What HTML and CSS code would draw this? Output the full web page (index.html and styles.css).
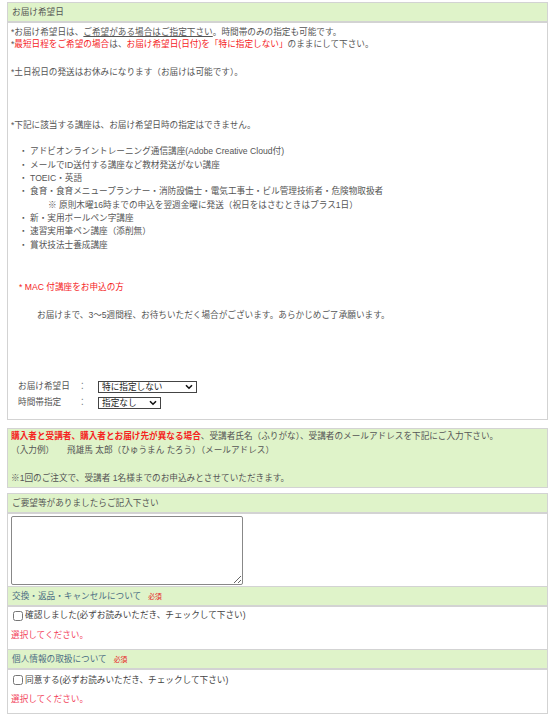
FILE: index.html
```html
<!DOCTYPE html>
<html lang="ja">
<head>
  <meta charset="UTF-8">
  <title>お届け希望日</title>
  <link rel="stylesheet" href="styles.css">
</head>
<body>
  <div class="page">
    <section class="box">
      <h2 class="box-head">お届け希望日</h2>
      <div class="box-body">
        <p class="lead">*お届け希望日は、<span class="under">ご希望がある場合はご指定下さい</span>。時間帯のみの指定も可能です。<br>
          *<span class="red">最短日程をご希望の場合</span>は、<span class="red">お届け希望日(日付)を「特に指定しない」</span>のままにして下さい。</p>
        <p class="holiday">*土日祝日の発送はお休みになります（お届けは可能です）。</p>
        <p class="except">*下記に該当する講座は、お届け希望日時の指定はできません。</p>
        <ul class="course-list">
          <li>・ アドビオンライントレーニング通信講座(Adobe Creative Cloud付)</li>
          <li>・ メールでID送付する講座など教材発送がない講座</li>
          <li>・ TOEIC・英語</li>
          <li>・ 食育・食育メニュープランナー・消防設備士・電気工事士・ビル管理技術者・危険物取扱者</li>
          <li class="sub">※ 原則木曜16時までの申込を翌週金曜に発送（祝日をはさむときはプラス1日）</li>
          <li>・ 新・実用ボールペン字講座</li>
          <li>・ 速習実用筆ペン講座（添削無）</li>
          <li>・ 賞状技法士養成講座</li>
        </ul>
        <p class="mac red">* MAC 付講座をお申込の方</p>
        <p class="mac-note">お届けまで、3〜5週間程、お待ちいただく場合がございます。あらかじめご了承願います。</p>

        <div class="date-form">
          <label for="deliv-date">お届け希望日</label>
          <span class="colon">：</span>
          <span class="sel sel-date">
            <select id="deliv-date">
              <option>特に指定しない</option>
            </select>
            <svg class="chev" width="8" height="6" viewBox="0 0 8 6"><path d="M1 1.2 L4 4.2 L7 1.2" fill="none" stroke="#111" stroke-width="1.6"/></svg>
          </span>
          <label for="deliv-time">時間帯指定</label>
          <span class="colon">：</span>
          <span class="sel sel-time">
            <select id="deliv-time">
              <option>指定なし</option>
            </select>
            <svg class="chev" width="8" height="6" viewBox="0 0 8 6"><path d="M1 1.2 L4 4.2 L7 1.2" fill="none" stroke="#111" stroke-width="1.6"/></svg>
          </span>
        </div>
      </div>
    </section>

    <section class="box box-note">
      <p><span class="red strong">購入者と受講者、購入者とお届け先が異なる場合</span>、受講者氏名（ふりがな）、受講者のメールアドレスを下記にご入力下さい。<br>
        （入力例）　　飛雄馬 太郎（ひゅうまん たろう）（メールアドレス）<br>
        <br>
        ※1回のご注文で、受講者 1名様までのお申込みとさせていただきます。</p>
    </section>

    <section class="box box-form">
      <h2 class="box-head">ご要望等がありましたらご記入下さい</h2>
      <div class="box-body body-textarea">
        <textarea class="request"></textarea>
      </div>

      <h2 class="box-head slate">交換・返品・キャンセルについて<span class="req">必須</span></h2>
      <div class="box-body body-check">
        <label class="check"><input type="checkbox">確認しました(必ずお読みいただき、チェックして下さい)</label>
        <p class="error">選択してください。</p>
      </div>

      <h2 class="box-head slate">個人情報の取扱について<span class="req">必須</span></h2>
      <div class="box-body body-check last">
        <label class="check"><input type="checkbox">同意する(必ずお読みいただき、チェックして下さい)</label>
        <p class="error">選択してください。</p>
      </div>
    </section>
  </div>
</body>
</html>
```

FILE: styles.css
```css
body {
  margin: 0;
  background: #fff;
  color: #555;
  font-family: "Liberation Sans", "Noto Sans CJK JP", sans-serif;
  font-size: 8.65px;
  line-height: 13.4px;
}

p {
  margin: 0;
}

.page {
  padding: 2px 11px 6px 7px;
}

.box {
  border: 1px solid #d3d3d3;
}

.box-head {
  margin: 0;
  height: 18px;
  line-height: 19px;
  padding-left: 4px;
  font-size: 8.65px;
  font-weight: normal;
  color: #555;
  background: #dff3c9;
  border-bottom: 2px solid #d3d3d3;
}

.box-head.slate {
  color: #4b6e84;
}

.req {
  margin-left: 7px;
  font-size: 6.8px;
  color: #e8211f;
}

.box-body {
  padding: 3px 3px 10px 3px;
}

.red {
  color: #f5231e;
}

.strong {
  font-weight: bold;
}

.under {
  text-decoration: underline;
}

.lead {
  line-height: 12px;
}

.holiday {
  margin-top: 15.6px;
}

.except {
  margin-top: 40.3px;
}

.course-list {
  list-style: none;
  margin: 12.6px 0 0;
  padding: 0 0 0 8px;
  line-height: 13.33px;
}

.course-list .sub {
  padding-left: 29px;
}

.mac {
  margin-top: 29.3px;
  padding-left: 8px;
}

.mac-note {
  margin-top: 14.3px;
  padding-left: 26px;
}

.date-form {
  margin-top: 58.6px;
  padding-left: 7px;
  display: grid;
  grid-template-columns: 60px 20px auto;
  grid-auto-rows: 12px;
  row-gap: 4px;
  align-items: center;
}

.colon {
  color: #666;
}

.sel {
  position: relative;
  display: block;
  width: 99px;
  height: 12px;
}

.sel-time {
  width: 63px;
}

.sel select {
  appearance: none;
  -webkit-appearance: none;
  display: block;
  box-sizing: border-box;
  width: 100%;
  height: 12px;
  margin: 0;
  padding: 0 0 0 3px;
  border: 1px solid #444;
  border-radius: 0;
  background: #fff;
  color: #222;
  font-family: "Liberation Sans", "Noto Sans CJK JP", sans-serif;
  font-size: 8.65px;
  line-height: 10px;
}

.chev {
  position: absolute;
  right: 4px;
  top: 3px;
  pointer-events: none;
}

.box-note {
  margin-top: 8px;
  background: #dff3c9;
  padding: 1.5px 3px 1.5px 3px;
  line-height: 13.8px;
}

.box-form {
  margin-top: 5px;
}

.body-textarea {
  padding: 2px 3px 1px 3px;
  border-bottom: 1px solid #d3d3d3;
}

.request {
  display: block;
  box-sizing: border-box;
  width: 232px;
  height: 69px;
  margin: 0;
  border: 1px solid #888;
  border-radius: 2px;
  resize: both;
}

.body-check {
  padding: 2px 3px 6px 3px;
  border-bottom: 1px solid #d3d3d3;
}

.body-check.last {
  padding-top: 4px;
  border-bottom: none;
}

.check {
  display: flex;
  align-items: center;
  height: 13.4px;
  color: #444;
}

.check input {
  width: 10px;
  height: 10px;
  margin: 0 2px 0 2px;
}

.error {
  margin-top: 6.6px;
  color: #f2445c;
}
```
